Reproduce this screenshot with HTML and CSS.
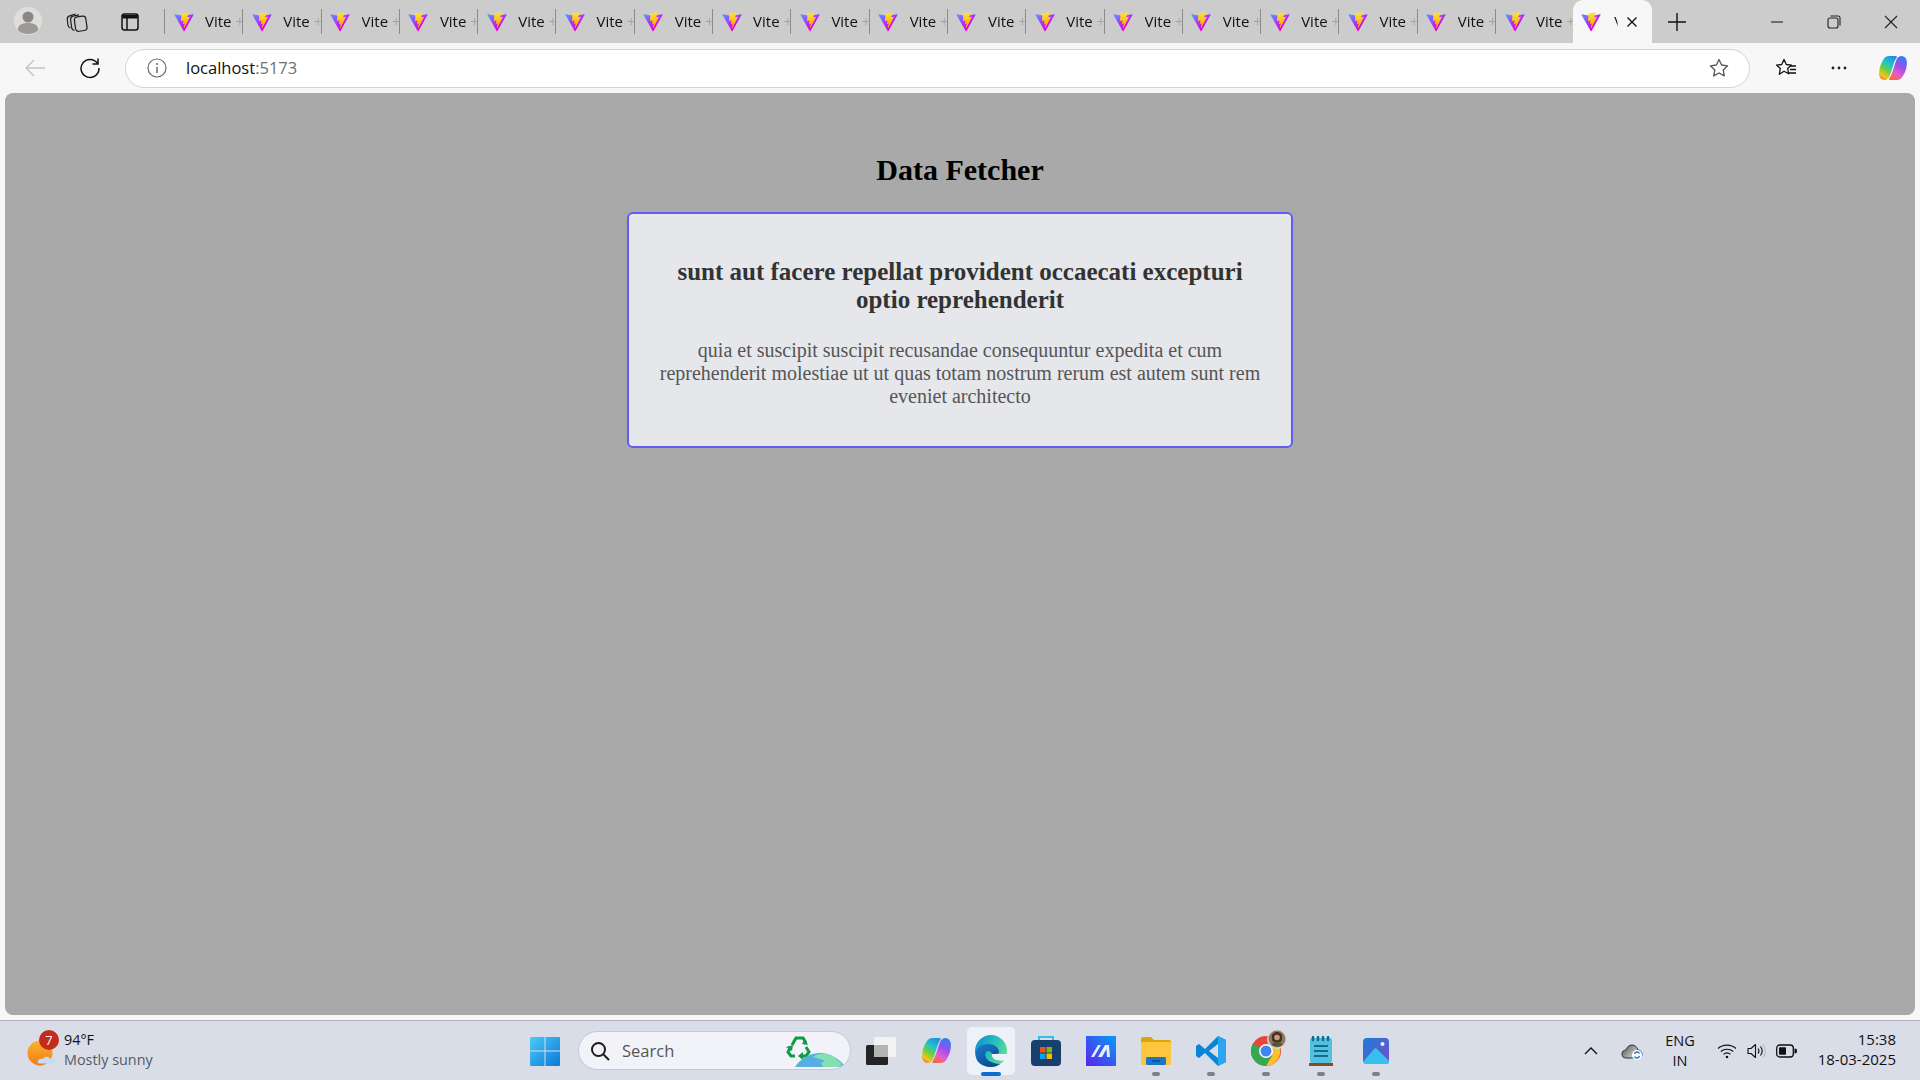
FILE: index.html
```html
<!DOCTYPE html>
<html lang="en">

<head>
    <meta charset="UTF-8">
    <meta name="viewport" content="width=device-width, initial-scale=1.0">
    <title>Vite + React</title>
    <link rel="stylesheet" href="styles.css">
</head>

<body>
    <svg class="defs" width="0" height="0">
        <defs>
            <linearGradient id="viteA" x1="6" y1="33" x2="235" y2="344" gradientUnits="userSpaceOnUse">
                <stop offset="0" stop-color="#45a8ff" />
                <stop offset="0.55" stop-color="#a53cff" />
                <stop offset="1" stop-color="#e000d8" />
            </linearGradient>
            <linearGradient id="viteB" x1="194" y1="8" x2="236" y2="300" gradientUnits="userSpaceOnUse">
                <stop offset="0" stop-color="#FFEA83" />
                <stop offset="0.08" stop-color="#FFDD35" />
                <stop offset="1" stop-color="#FFA800" />
            </linearGradient>
            <linearGradient id="copilotA" x1="0.7" y1="0" x2="0.2" y2="1">
                <stop offset="0" stop-color="#1f8fe8" />
                <stop offset="0.35" stop-color="#22c7c0" />
                <stop offset="0.6" stop-color="#6fd03c" />
                <stop offset="0.85" stop-color="#f7c41c" />
                <stop offset="1" stop-color="#f4742a" />
            </linearGradient>
            <linearGradient id="copilotB" x1="0.7" y1="0" x2="0.3" y2="1">
                <stop offset="0" stop-color="#2f7ff0" />
                <stop offset="0.4" stop-color="#9a4ff0" />
                <stop offset="0.75" stop-color="#e85cc4" />
                <stop offset="1" stop-color="#f5693c" />
            </linearGradient>
            <symbol id="vite" viewBox="0 0 410 404">
                <path d="M399.641 59.5246L215.643 388.545C211.844 395.338 202.084 395.378 198.228 388.618L10.5817 59.5563C6.38087 52.1896 12.6802 43.2665 21.0281 44.7586L205.223 77.6824C206.398 77.8924 207.601 77.8904 208.776 77.6763L389.119 44.8058C397.439 43.2894 403.768 52.1434 399.641 59.5246Z" fill="url(#viteA)" />
                <path d="M292.965 1.5744L156.801 28.2552C154.563 28.6937 152.906 30.5903 152.771 32.8664L144.395 174.33C144.198 177.662 147.258 180.248 150.51 179.498L188.42 170.749C191.967 169.931 195.172 173.055 194.443 176.622L183.18 231.775C182.422 235.487 185.907 238.661 189.532 237.56L212.947 230.446C216.577 229.344 220.065 232.527 219.297 236.242L201.398 322.875C200.278 328.294 207.486 331.249 210.492 326.603L212.5 323.5L323.454 102.072C325.312 98.3645 322.108 94.1427 318.036 94.9295L279.014 102.46C275.347 103.168 272.227 99.7532 273.262 96.1651L298.731 7.86689C299.767 4.27294 296.636 0.855181 292.965 1.5744Z" fill="url(#viteB)" />
            </symbol>
            <symbol id="copilot" viewBox="0 0 30 28">
                <path d="M11 1h7c1.200 0 1.600 1 1 1.800-1.500 2-2.300 4-3 6.200L12 21c-1 3.500-3 6-6 6-3.500 0-6-3-6-7 0-6 2-11 4.500-15C6 2.400 8 1 11 1z" fill="url(#copilotA)" />
                <path d="M19 27h-7c-1.200 0-1.600-1-1-1.800 1.500-2 2.300-4 3-6.200l4-12c1-3.500 3-6 6-6 3.500 0 6 3 6 7 0 6-2 11-4.500 15C24 25.600 22 27 19 27z" fill="url(#copilotB)" />
            </symbol>
        </defs>
    </svg>

    <header class="titlebar">
        <div class="profile">
            <svg width="28" height="28" viewBox="0 0 28 28">
                <circle cx="14" cy="14" r="14" fill="#e0dedb" />
                <circle cx="14" cy="10" r="5.500" fill="#8a8886" />
                <path d="M3.800 23c0-5 4-7 10.200-7s10.200 2 10.200 7c-2.500 2.800-6 4-10.200 4s-7.700-1.200-10.200-4z" fill="#9c9a97" />
            </svg>
        </div>
        <div class="title-btn title-btn-collections">
            <svg width="22" height="22" viewBox="0 0 22 22" fill="none" stroke="#1c1c1c" stroke-width="1.200">
                <rect x="9" y="5.500" width="11.500" height="14.500" rx="3" transform="rotate(-8 14.500 13)" />
                <path d="M8.500 19.500C7 19.300 6 18.300 5.700 17L4.600 8.800C4.400 7 5.300 5.600 7 5.200L13 3.800" />
                <path d="M4.300 17C3 16.500 2.100 15.500 1.900 14L1.300 8.500C1.100 6.800 2 5.400 3.700 4.900L9.500 3" />
            </svg>
        </div>
        <div class="title-btn title-btn-tabs">
            <svg width="20" height="20" viewBox="0 0 20 20" fill="none" stroke="#111" stroke-width="1.500">
                <rect x="2" y="2" width="16" height="16" rx="2.500" />
                <path d="M2.500 3h15v3.500h-15z" fill="#111" stroke="none" />
                <path d="M7 6v12" />
            </svg>
        </div>
        <div class="tabs">
            <div class="tab"><svg class="tab-icon"><use href="#vite" /></svg><span class="tab-title">Vite +</span></div>
            <div class="tab"><svg class="tab-icon"><use href="#vite" /></svg><span class="tab-title">Vite +</span></div>
            <div class="tab"><svg class="tab-icon"><use href="#vite" /></svg><span class="tab-title">Vite +</span></div>
            <div class="tab"><svg class="tab-icon"><use href="#vite" /></svg><span class="tab-title">Vite +</span></div>
            <div class="tab"><svg class="tab-icon"><use href="#vite" /></svg><span class="tab-title">Vite +</span></div>
            <div class="tab"><svg class="tab-icon"><use href="#vite" /></svg><span class="tab-title">Vite +</span></div>
            <div class="tab"><svg class="tab-icon"><use href="#vite" /></svg><span class="tab-title">Vite +</span></div>
            <div class="tab"><svg class="tab-icon"><use href="#vite" /></svg><span class="tab-title">Vite +</span></div>
            <div class="tab"><svg class="tab-icon"><use href="#vite" /></svg><span class="tab-title">Vite +</span></div>
            <div class="tab"><svg class="tab-icon"><use href="#vite" /></svg><span class="tab-title">Vite +</span></div>
            <div class="tab"><svg class="tab-icon"><use href="#vite" /></svg><span class="tab-title">Vite +</span></div>
            <div class="tab"><svg class="tab-icon"><use href="#vite" /></svg><span class="tab-title">Vite +</span></div>
            <div class="tab"><svg class="tab-icon"><use href="#vite" /></svg><span class="tab-title">Vite +</span></div>
            <div class="tab"><svg class="tab-icon"><use href="#vite" /></svg><span class="tab-title">Vite +</span></div>
            <div class="tab"><svg class="tab-icon"><use href="#vite" /></svg><span class="tab-title">Vite +</span></div>
            <div class="tab"><svg class="tab-icon"><use href="#vite" /></svg><span class="tab-title">Vite +</span></div>
            <div class="tab"><svg class="tab-icon"><use href="#vite" /></svg><span class="tab-title">Vite +</span></div>
            <div class="tab"><svg class="tab-icon"><use href="#vite" /></svg><span class="tab-title">Vite +</span></div>
            <div class="tab tab-active">
                <svg class="tab-icon"><use href="#vite" /></svg>
                <span class="tab-title tab-title-short">V</span>
                <svg class="tab-close" width="12" height="12" viewBox="0 0 12 12" stroke="#111" stroke-width="1.400">
                    <path d="M1.500 1.500l9 9M10.500 1.500l-9 9" />
                </svg>
            </div>
        </div>
        <svg class="new-tab" width="18" height="18" viewBox="0 0 18 18" stroke="#111" stroke-width="1.400">
            <path d="M9 0v18M0 9h18" />
        </svg>
        <div class="window-btns">
            <svg width="14" height="14" viewBox="0 0 14 14" stroke="#222" stroke-width="1.100"><path d="M1 7h12" /></svg>
            <svg width="14" height="14" viewBox="0 0 14 14" fill="none" stroke="#222" stroke-width="1.100">
                <rect x="1" y="3" width="10" height="10" rx="2" />
                <path d="M3.500 1h7.500a2 2 0 0 1 2 2v7.500" />
            </svg>
            <svg width="14" height="14" viewBox="0 0 14 14" stroke="#222" stroke-width="1.100"><path d="M1 1l12 12M13 1 1 13" /></svg>
        </div>
    </header>

    <nav class="toolbar">
        <svg class="tool-back" width="22" height="20" viewBox="0 0 22 20" fill="none" stroke="#c4c4c4" stroke-width="1.400">
            <path d="M21 10H2M10 2l-8 8 8 8" />
        </svg>
        <svg class="tool-reload" width="22" height="22" viewBox="0 0 22 22" fill="none" stroke="#111" stroke-width="1.500">
            <path d="M18.500 6.500A9 9 0 1 0 20 11" />
            <path d="M19 1.500v5.500h-5.500" />
        </svg>
        <div class="address">
            <svg class="info-icon" width="20" height="20" viewBox="0 0 20 20" fill="none" stroke="#6a6a6a" stroke-width="1.200">
                <circle cx="10" cy="10" r="9" />
                <path d="M10 9v6" stroke-width="1.500" />
                <circle cx="10" cy="6" r="1" fill="#6a6a6a" stroke="none" />
            </svg>
            <span class="url">localhost<span class="url-port">:5173</span></span>
            <svg class="star" width="20" height="20" viewBox="0 0 20 20" fill="none" stroke="#555" stroke-width="1.300">
                <path d="M10 1.500l2.600 5.500 6 .8-4.400 4.100 1.100 6L10 15l-5.300 2.900 1.100-6L1.400 7.800l6-.8z" stroke-linejoin="round" />
            </svg>
        </div>
        <svg class="tool-favs" width="22" height="20" viewBox="0 0 22 20" fill="none" stroke="#111" stroke-width="1.300">
            <path d="M9 1.500l2.300 5 5.200.6-3.800 3.500 1 5.200L9 13.300l-4.700 3 1-5.800L1.500 7.100l5.200-.6z" stroke-linejoin="round" />
            <path d="M15 8h6M15 11.500h6M14 15h7" />
        </svg>
        <svg class="tool-more" width="16" height="4" viewBox="0 0 16 4" fill="#222">
            <circle cx="2" cy="2" r="1.400" /><circle cx="8" cy="2" r="1.400" /><circle cx="14" cy="2" r="1.400" />
        </svg>
        <svg class="tool-copilot" width="28" height="26"><use href="#copilot" /></svg>
    </nav>

    <main class="viewport">
        <h1 class="page-title">Data Fetcher</h1>
        <article class="post-card">
            <h2 class="post-title">sunt aut facere repellat provident occaecati excepturi optio reprehenderit</h2>
            <p class="post-body">quia et suscipit suscipit recusandae consequuntur expedita et cum reprehenderit molestiae ut ut quas totam nostrum rerum est autem sunt rem eveniet architecto</p>
        </article>
    </main>

    <footer class="taskbar">
        <div class="weather">
            <div class="weather-icon">
                <svg width="32" height="36" viewBox="0 0 32 36">
                    <defs>
                        <linearGradient id="sun" x1="0" y1="0" x2="0" y2="1">
                            <stop offset="0" stop-color="#f6b72c" />
                            <stop offset="1" stop-color="#f47a17" />
                        </linearGradient>
                    </defs>
                    <circle cx="13" cy="20" r="12.500" fill="url(#sun)" />
                    <path d="M11 30c-1-3 2-5 5-4 1-3 6-3 7-.5 3-.5 5 1 5 2.500 0 1.500-1.500 2.500-3 2.500H13c-1 0-2-.3-2-.5z" fill="#c5dcf5" />
                </svg>
                <span class="weather-badge">7</span>
            </div>
            <div class="weather-text">
                <span class="weather-temp">94°F</span>
                <span class="weather-desc">Mostly sunny</span>
            </div>
        </div>

        <div class="task-center">
            <div class="task-item task-start">
                <svg width="30" height="30" viewBox="0 0 30 30">
                    <defs>
                        <linearGradient id="winBlue" x1="0" y1="0" x2="1" y2="1">
                            <stop offset="0" stop-color="#4fcaf9" />
                            <stop offset="1" stop-color="#0a78d6" />
                        </linearGradient>
                    </defs>
                    <path d="M1 1h13.500v13.500H0V2a1 1 0 0 1 1-1zM15.500 1H29a1 1 0 0 1 1 1v12.500H15.500zM0 15.500h14.500V30H1a1 1 0 0 1-1-1zM15.500 15.500H30V29a1 1 0 0 1-1 1H15.500z" fill="url(#winBlue)" />
                </svg>
            </div>
            <div class="search-pill">
                <svg width="20" height="20" viewBox="0 0 20 20" fill="none" stroke="#1c1c1c" stroke-width="2">
                    <circle cx="8.500" cy="8.500" r="6.500" /><path d="M13.500 13.500 19 19" />
                </svg>
                <span class="search-label">Search</span>
                <svg class="search-art" width="60" height="34" viewBox="0 0 60 34">
                    <g fill="none" stroke="#0f9a45" stroke-width="3">
                        <path d="M7 12l4-7h7l3 5" />
                        <path d="M21 14l3 5-3 4h-5" />
                        <path d="M10 23H6l-3-4 2-4" />
                    </g>
                    <path d="M20 6l3 6-6-1zM18 19v8l-5-4zM1 14l7-2-1 6z" fill="#0f9a45" />
                    <path d="M10 34c6-9 15-14 25-14 10 0 18 5 24 12-1 1-2 2-4 2z" fill="#56aee2" />
                    <path d="M28 24c5-4 13-4 20-1l9 8-3 3H38l-2-4 4-2-5-2z" fill="#83e0b0" />
                </svg>
            </div>
            <div class="task-item">
                <svg width="30" height="28" viewBox="0 0 30 28">
                    <rect x="8" y="0" width="22" height="20" rx="1.500" fill="#f3f3f3" />
                    <rect x="0" y="8" width="22" height="20" rx="1.500" fill="#242424" />
                    <rect x="8" y="8" width="14" height="12" fill="#b4b4b4" />
                </svg>
            </div>
            <div class="task-item">
                <svg width="29" height="27"><use href="#copilot" /></svg>
            </div>
            <div class="task-item task-active">
                <svg width="32" height="32" viewBox="0 0 32 32">
                    <defs>
                        <linearGradient id="edgeG" x1="0" y1="0.200" x2="1" y2="0.700">
                            <stop offset="0" stop-color="#0f8fd8" />
                            <stop offset="0.55" stop-color="#2cc2b8" />
                            <stop offset="1" stop-color="#6be08a" />
                        </linearGradient>
                        <linearGradient id="edgeD" x1="0" y1="0" x2="0.600" y2="1">
                            <stop offset="0" stop-color="#1b7fcf" />
                            <stop offset="1" stop-color="#0a4a8e" />
                        </linearGradient>
                    </defs>
                    <circle cx="16" cy="16" r="16" fill="url(#edgeG)" />
                    <path d="M0.500 19C1 12 7 9 13 9c6 0 11 3 11 8 0 1-1 2-3 2h-4c-1-3-4-4-6-2-2 3 0 8 5 10 3 1 6 2 9 2-3 2-5 3-9 3C7 32 0.500 27 0.500 19z" fill="url(#edgeD)" />
                    <path d="M17 19h15c-.2 2-1 4-2 6-3 1-7 1-10-.5-2.500-1.200-3.500-3.500-3-5.500z" fill="#eef1f8" />
                </svg>
            </div>
            <div class="task-item">
                <svg width="30" height="32" viewBox="0 0 30 32">
                    <path d="M8 6V2h14v4" fill="none" stroke="#2fc0ea" stroke-width="2" />
                    <rect x="0" y="5" width="30" height="26" rx="4" fill="#17406f" />
                    <rect x="9" y="12" width="5.500" height="5.500" fill="#f25022" />
                    <rect x="15.500" y="12" width="5.500" height="5.500" fill="#7fba00" />
                    <rect x="9" y="18.500" width="5.500" height="5.500" fill="#00a4ef" />
                    <rect x="15.500" y="18.500" width="5.500" height="5.500" fill="#ffb900" />
                </svg>
            </div>
            <div class="task-item">
                <svg width="30" height="30" viewBox="0 0 30 30">
                    <defs>
                        <linearGradient id="maG" x1="0" y1="1" x2="1" y2="0">
                            <stop offset="0" stop-color="#5a22f0" />
                            <stop offset="1" stop-color="#0a9af5" />
                        </linearGradient>
                    </defs>
                    <rect width="30" height="30" fill="url(#maG)" />
                    <path d="M5 21 12 9h3L8 21zM12 21l7-12h4l1 12h-3l-.5-8-4.500 8z" fill="#e8ecff" />
                </svg>
            </div>
            <div class="task-item task-running">
                <svg width="30" height="28" viewBox="0 0 30 28">
                    <path d="M0 2a2 2 0 0 1 2-2h8l3 3h15a2 2 0 0 1 2 2v4H0z" fill="#e0a30a" />
                    <rect x="0" y="5" width="30" height="23" rx="1.500" fill="#fcc73f" />
                    <rect x="5" y="20" width="20" height="8" rx="1.500" fill="#1b76c9" />
                    <path d="M11 24h8" stroke="#0d4a8c" stroke-width="1.500" />
                </svg>
            </div>
            <div class="task-item task-running">
                <svg width="30" height="30" viewBox="0 0 30 30">
                    <path d="M22 0 30 4v22l-8 4-13-13-6 5-3-2V10l3-2 6 5z" fill="#0a84d6" />
                    <path d="M22 0 30 4v22l-8 4z" fill="#2aa7ee" />
                    <path d="M22 8v14l-9-7z" fill="#d8dde8" />
                </svg>
            </div>
            <div class="task-item task-running">
                <div class="chrome-icon">
                    <svg width="30" height="30" viewBox="0 0 30 30">
                        <circle cx="15" cy="15" r="15" fill="#e8453c" />
                        <path d="M15 15 2 7.500A15 15 0 0 0 15 30l6-11z" fill="#34a853" />
                        <path d="M15 9h13a15 15 0 0 1-13 21l6.500-11z" fill="#fbc02d" />
                        <circle cx="15" cy="15" r="7" fill="#fff" />
                        <circle cx="15" cy="15" r="5.500" fill="#3f86f4" />
                    </svg>
                    <svg class="chrome-avatar" width="20" height="20" viewBox="0 0 20 20">
                        <circle cx="10" cy="10" r="10" fill="#ddd8d2" />
                        <circle cx="10" cy="10" r="8.500" fill="#8a7a66" />
                        <path d="M5 10c-1-5 2-7 5-7s6 2 5 7c0 2-1 3-2 3H7c-1 0-2-1-2-3z" fill="#4a2f1e" />
                        <circle cx="10" cy="8.500" r="2.800" fill="#c79a80" />
                        <path d="M4.500 15.500c1-3.500 10-3.500 11 0-3 3-8 3-11 0z" fill="#4e5a30" />
                    </svg>
                </div>
            </div>
            <div class="task-item task-running">
                <svg width="24" height="30" viewBox="0 0 24 30">
                    <rect x="1" y="2" width="22" height="25" rx="2" fill="#55bfe0" />
                    <rect x="0" y="27" width="24" height="3" fill="#8c4a1c" />
                    <path d="M4 1v3M9 1v3M14 1v3M19 1v3" stroke="#0f6d92" stroke-width="2.500" stroke-linecap="round" />
                    <path d="M5 10h14M5 15h14M5 20h14" stroke="#0f6d92" stroke-width="1.800" />
                </svg>
            </div>
            <div class="task-item task-running">
                <svg width="26" height="26" viewBox="0 0 26 26">
                    <defs>
                        <linearGradient id="photoBg" x1="0" y1="0" x2="1" y2="1">
                            <stop offset="0" stop-color="#1a7ed6" />
                            <stop offset="1" stop-color="#7a4cc9" />
                        </linearGradient>
                    </defs>
                    <rect width="26" height="26" rx="4" fill="url(#photoBg)" />
                    <circle cx="19.500" cy="6" r="2" fill="#f0f0f5" />
                    <path d="M0 24 11 11c1-1 2-1 3 0l12 12v1a2 2 0 0 1-2 2H2z" fill="#36c0ee" />
                </svg>
            </div>
        </div>

        <div class="tray">
            <svg class="tray-chevron" width="14" height="8" viewBox="0 0 14 8" fill="none" stroke="#111" stroke-width="1.400"><path d="M1 7l6-6 6 6" /></svg>
            <div class="tray-cloud">
                <svg width="22" height="18" viewBox="0 0 22 18">
                    <defs>
                        <linearGradient id="cloudG" x1="0" y1="0" x2="1" y2="0.600">
                            <stop offset="0" stop-color="#555" />
                            <stop offset="1" stop-color="#ddd" />
                        </linearGradient>
                    </defs>
                    <path d="M5 16c-3 0-4-2-4-4 0-3 2-4 4-4 1-3 3-5 6-5 3 0 5 2 6 5 2 0 4 2 4 4 0 2-1 4-4 4z" fill="url(#cloudG)" stroke="#333" stroke-width="1" />
                    <circle cx="16" cy="13" r="5" fill="#fff" />
                    <path d="M13.500 12a2.700 2.700 0 0 1 5-.5M18.500 14a2.700 2.700 0 0 1-5 .5" fill="none" stroke="#1a78d6" stroke-width="1.400" />
                </svg>
            </div>
            <div class="tray-lang"><span>ENG</span><span>IN</span></div>
            <svg class="tray-wifi" width="20" height="16" viewBox="0 0 20 16" fill="none" stroke="#111" stroke-width="1.200">
                <path d="M1 5.500c5-4.500 13-4.500 18 0M3.800 8.500c3.500-3 9-3 12.400 0M6.600 11.300c2-1.600 4.800-1.600 6.800 0" />
                <circle cx="10" cy="14" r="1.300" fill="#111" stroke="none" />
            </svg>
            <svg class="tray-volume" width="20" height="18" viewBox="0 0 20 18" fill="none" stroke="#111" stroke-width="1.100">
                <path d="M1 6.500h3L8.500 2.500v13L4 11.500H1z" stroke-linejoin="round" />
                <path d="M11 6.500c1.200 1.500 1.200 3.500 0 5M13.500 4.500c2 2.700 2 6.300 0 9" />
                <path d="M16 2.500c3 3.900 3 9.100 0 13" stroke="#b5b5b5" />
            </svg>
            <svg class="tray-battery" width="21" height="14" viewBox="0 0 21 14">
                <rect x="0.700" y="1" width="16.600" height="12" rx="3" fill="none" stroke="#111" stroke-width="1.300" />
                <rect x="3" y="3.300" width="7" height="7.400" rx="1" fill="#111" />
                <path d="M18.500 4.500h.5a2 2 0 0 1 2 2v1a2 2 0 0 1-2 2h-.5z" fill="#111" />
            </svg>
            <div class="tray-clock"><span>15:38</span><span>18-03-2025</span></div>
        </div>
    </footer>
</body>

</html>
```

FILE: styles.css
```css
* {
    box-sizing: border-box;
}

html,
body {
    height: 100%;
}

body {
    margin: 0;
    display: flex;
    flex-direction: column;
    overflow: hidden;
    background: #f7f7f7;
    font-family: "Open Sans", "Noto Sans", sans-serif;
    color: #111;
}

.defs {
    position: absolute;
}

/* title bar with the tabs */
.titlebar {
    height: 43px;
    flex: none;
    display: flex;
    align-items: center;
    background: #cccccc;
}

.profile {
    width: 28px;
    height: 28px;
    margin-left: 14px;
    margin-top: -1px;
}

.title-btn {
    display: flex;
}

.title-btn-collections {
    margin-left: 24px;
}

.title-btn-tabs {
    margin-left: 32px;
}

.tabs {
    display: flex;
    height: 43px;
    margin-left: 24px;
}

.tab {
    width: 78.3px;
    flex: none;
    display: flex;
    align-items: center;
    position: relative;
    padding-left: 9.5px;
}

.tab::before {
    content: "";
    position: absolute;
    left: 0;
    top: 9px;
    height: 25px;
    width: 1px;
    background: #8b8b8b;
}

.tab-icon {
    width: 20px;
    height: 20px;
    flex: none;
}

.tab-title {
    margin-left: 11.5px;
    margin-top: -1px;
    width: 39px;
    flex: none;
    white-space: nowrap;
    font-size: 15px;
    -webkit-mask-image: linear-gradient(to right, #000 68%, rgba(0, 0, 0, 0.25) 80%, rgba(0, 0, 0, 0.15) 100%);
    mask-image: linear-gradient(to right, #000 68%, rgba(0, 0, 0, 0.25) 80%, rgba(0, 0, 0, 0.15) 100%);
}

.tab-active {
    background: #f7f7f7;
    border-radius: 10px 10px 0 0;
    padding-left: 8px;
}

.tab-active::before {
    display: none;
}

.tab-title-short {
    width: auto;
    margin-left: 13px;
    -webkit-mask-image: linear-gradient(to right, #000 30%, transparent 50%);
    mask-image: linear-gradient(to right, #000 30%, transparent 50%);
}

.tab-close {
    margin-left: 3px;
    flex: none;
}

.new-tab {
    margin-left: 16px;
}

.window-btns {
    margin-left: auto;
    display: flex;
    gap: 43px;
    padding-right: 22px;
}

/* address row */
.toolbar {
    height: 50px;
    flex: none;
    display: flex;
    align-items: center;
    background: #f7f7f7;
}

.tool-back {
    margin-left: 24px;
}

.tool-reload {
    margin-left: 33px;
}

.address {
    width: 1625px;
    height: 39px;
    margin-left: 24px;
    display: flex;
    align-items: center;
    background: #fff;
    border: 1px solid #d4d4d4;
    border-radius: 20px;
    padding: 0 20px 0 21px;
}

.url {
    margin-left: 19px;
    margin-top: -2px;
    font-size: 16.5px;
}

.url-port {
    color: #6f6f6f;
}

.star {
    margin-left: auto;
}

.tool-favs {
    margin-left: 25px;
}

.tool-more {
    margin-left: 34px;
}

.tool-copilot {
    margin-left: 32px;
}

/* the page itself */
.viewport {
    flex: 1;
    margin: 0 5px 5px;
    border-radius: 8px;
    background: #a9a9a9;
    display: flex;
    flex-direction: column;
    align-items: center;
    font-family: "Liberation Serif", serif;
    text-align: center;
}

.page-title {
    margin: 59px 0 0;
    font-size: 30px;
    line-height: 35px;
    font-weight: bold;
    color: #000;
}

.post-card {
    width: 666px;
    height: 236px;
    margin-top: 25px;
    padding: 44px 30px 0;
    background: #e5e7eb;
    border: 2px solid #5f5cf6;
    border-radius: 6px;
}

.post-title {
    margin: 0;
    font-size: 25px;
    line-height: 28px;
    font-weight: bold;
    color: #333;
}

.post-body {
    margin: 25px 0 0;
    font-size: 20px;
    line-height: 23px;
    color: #555;
}

/* windows taskbar */
.taskbar {
    height: 60px;
    flex: none;
    display: flex;
    align-items: center;
    position: relative;
    background: #d8dde8;
    border-top: 1px solid #b2b5bd;
}

.weather {
    width: 530px;
    display: flex;
    align-items: center;
    flex: none;
    padding-left: 27px;
}

.weather-icon {
    position: relative;
    width: 32px;
    height: 36px;
}

.weather-badge {
    position: absolute;
    left: 12px;
    top: -3px;
    width: 20px;
    height: 20px;
    border-radius: 50%;
    background: #c42b1c;
    color: #fff;
    font-size: 13px;
    line-height: 20px;
    text-align: center;
}

.weather-text {
    display: flex;
    flex-direction: column;
    margin-left: 5px;
    margin-top: -2px;
    font-size: 14.4px;
    line-height: 20px;
}

.weather-desc {
    color: #555a63;
}

.task-center {
    display: flex;
    align-items: center;
    height: 100%;
}

.task-item {
    width: 48px;
    height: 48px;
    margin-right: 7px;
    display: flex;
    align-items: center;
    justify-content: center;
    position: relative;
    border-radius: 5px;
}

.task-start {
    width: 30px;
    margin-right: 18px;
}

.task-active {
    background: #eef1f8;
}

.task-active::after,
.task-running::after {
    content: "";
    position: absolute;
    bottom: -1px;
    left: 50%;
    transform: translateX(-50%);
    height: 4px;
    border-radius: 2px;
}

.task-active::after {
    width: 20px;
    background: #0a6cd4;
}

.task-running::after {
    width: 8px;
    background: #7c8087;
}

.search-pill {
    width: 273px;
    height: 39px;
    margin-right: 6px;
    padding-left: 11px;
    display: flex;
    align-items: center;
    position: relative;
    overflow: hidden;
    background: #f1f3f9;
    border: 1px solid #c3c8d2;
    border-radius: 20px;
}

.search-label {
    margin-left: 12px;
    font-size: 16.5px;
    color: #555;
}

.search-art {
    position: absolute;
    right: 5px;
    bottom: 2px;
}

.chrome-icon {
    position: relative;
    width: 30px;
    height: 30px;
}

.chrome-avatar {
    position: absolute;
    right: -6px;
    top: -7px;
}

.tray {
    margin-left: auto;
    display: flex;
    align-items: center;
    padding-right: 24px;
}

.tray-chevron {
    margin-right: 23px;
}

.tray-cloud {
    display: flex;
    margin-right: 22px;
}

.tray-lang {
    display: flex;
    flex-direction: column;
    align-items: center;
    margin-right: 22px;
    font-size: 14.5px;
    line-height: 20px;
}

.tray-wifi {
    margin-right: 10px;
}

.tray-volume {
    margin-right: 9px;
}

.tray-battery {
    margin-right: 21px;
}

.tray-clock {
    display: flex;
    flex-direction: column;
    align-items: flex-end;
    margin-top: -4px;
    font-size: 15px;
    line-height: 20px;
}
```
